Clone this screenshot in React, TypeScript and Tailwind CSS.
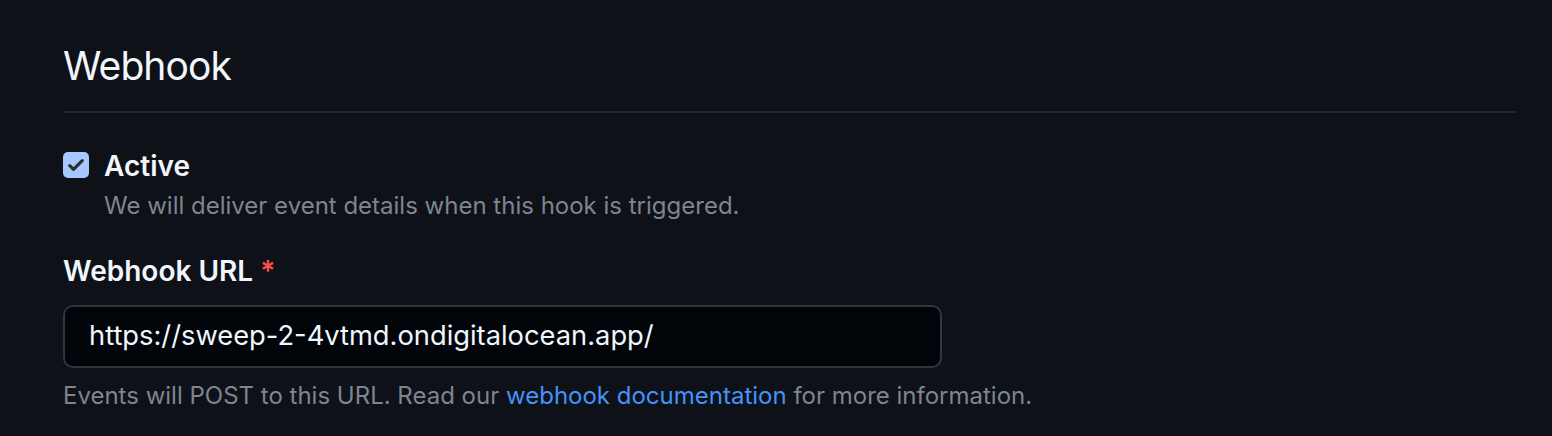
export default function App() {
  return (
    <div className="h-[436px] w-full overflow-hidden bg-[#0e1117] pl-[63px] pr-[35px] pt-[38px] font-['Inter',sans-serif] text-[#f0f6fc]">
      <div className="border-b-2 border-[#21262d] pb-[17px]">
        <h2 className="text-[39px] leading-[56px] font-normal tracking-[-0.9px]">Webhook</h2>
      </div>

      <div className="mt-[38px] flex items-start gap-[15px]">
        <span className="mt-[1px] flex h-[26px] w-[26px] items-center justify-center rounded-[5px] bg-[#a6c8ff]">
          <svg width="20" height="20" viewBox="0 0 16 16" fill="none">
            <path d="M3 8.5l3 3 7-7" stroke="#2d2f33" strokeWidth="2.6" strokeLinecap="round" strokeLinejoin="round" />
          </svg>
        </span>
        <div>
          <div className="text-[28px] leading-[30px] font-semibold">Active</div>
          <p className="mt-[10px] text-[24px] leading-[30px] text-[#7d8590]">
            We will deliver event details when this hook is triggered.
          </p>
        </div>
      </div>

      <div className="mt-[33px]">
        <label className="block text-[28px] leading-[34px] font-semibold">
          Webhook URL <span className="text-[#f85149]">*</span>
        </label>
        <div className="mt-[17px] flex h-[63px] w-[879px] items-center rounded-[10px] border-2 border-[#30363d] bg-[#010409] px-[24px] text-[27.3px]">
          https://sweep-2-4vtmd.ondigitalocean.app/
        </div>
        <p className="mt-[12px] text-[24px] leading-[32px] text-[#7d8590]">
          Events will POST to this URL. Read our <span className="text-[#4493f8]">webhook documentation</span> for more information.
        </p>
      </div>
    </div>
  );
}
